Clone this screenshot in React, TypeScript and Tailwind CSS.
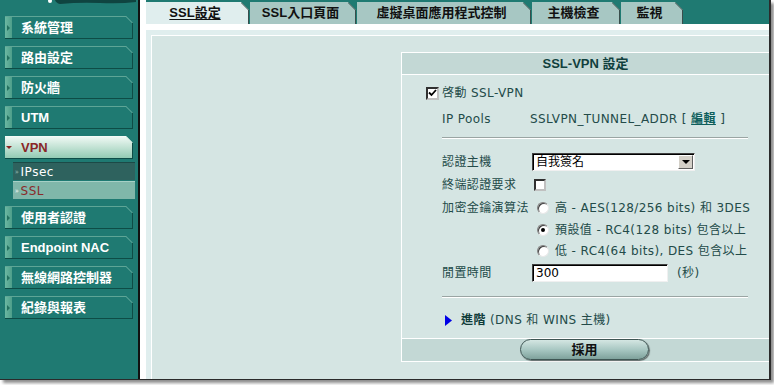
import React from "react";

const cjk = "font-['DejaVu_Sans','Noto_Sans_CJK_TC',sans-serif]";
const bold = "font-['Liberation_Sans','Noto_Sans_CJK_TC',sans-serif]";

const Notch = ({ line }: { line: string }) => (
  <svg className="absolute right-[-1px] top-[-1px]" width="7" height="7" viewBox="0 0 7 7">
    <polygon points="0,0 7,0 7,7" fill="#1f7a72" />
    <line x1="0" y1="0.5" x2="6.5" y2="7" stroke={line} strokeWidth="1" />
  </svg>
);

const MenuButton = ({ label }: { label: string }) => (
  <div className="relative ml-[5px] flex h-[23px] w-[128px] items-center border-t border-t-[#5ea596] border-r border-r-[#0e4c46] border-b border-b-[#0e4c46] bg-[#1f7a72]">
    <div className="flex h-full w-[7px] items-center justify-center bg-gradient-to-r from-[#6bb8a2] to-[#4e9e8a]">
      <span className="block h-0 w-0 border-y-[3px] border-l-[3px] border-y-transparent border-l-[#23705f]" />
    </div>
    <span className={`ml-[9px] text-[13px] font-bold text-white ${bold}`}>{label}</span>
    <Notch line="#6fb2a3" />
  </div>
);

const Sidebar = () => (
  <div className="flex h-full w-[138px] shrink-0 flex-col bg-[#1f7a72]">
    <div className="h-[16px]">
      <svg width="138" height="16" viewBox="0 0 138 16">
        <circle cx="50" cy="1" r="2" fill="#ffffff" />
        <path d="M55 0 H136 V2 Q120 4 100 3 Q80 2 60 4 Q56 3 55 0 Z" fill="#0f4440" />
      </svg>
    </div>
    <div className="flex flex-col gap-[7px]">
      {["系統管理", "路由設定", "防火牆", "UTM"].map((m) => (
        <MenuButton key={m} label={m} />
      ))}
      <div className="flex flex-col">
        <div className="relative ml-[5px] flex h-[23px] w-[128px] items-center border-t border-t-[#f4fbf7] border-r border-r-[#0e4c46] border-b border-b-[#0e4c46] bg-gradient-to-b from-[#eef8f3] to-[#93cbb4]">
          <div className="flex h-full w-[7px] items-center justify-center">
            <span className="block h-0 w-0 border-x-[3px] border-t-[3px] border-x-transparent border-t-[#8a2424]" />
          </div>
          <span className={`ml-[9px] text-[13px] font-bold text-[#8a2626] ${bold}`}>VPN</span>
          <Notch line="#d8ece2" />
        </div>
        <div className="ml-[13px] mt-[3px] flex h-[18px] w-[122px] items-center border-t border-t-[#1c4a47] bg-[#2e625e]">
          <span className="ml-[2px] text-[7px] leading-none text-[#8fb0aa]">»</span>
          <span className={`ml-[2px] text-[12px] tracking-[0.5px] text-white ${cjk}`}>IPsec</span>
        </div>
        <div className="ml-[13px] mt-[1px] flex h-[18px] w-[122px] items-center border-t border-t-[#a6d0c6] bg-[#80b7aa]">
          <span className="ml-[2px] text-[7px] leading-none text-[#e6f3ef]">»</span>
          <span className={`ml-[2px] text-[12px] tracking-[0.5px] text-[#8a2a2a] ${cjk}`}>SSL</span>
        </div>
      </div>
      {["使用者認證", "Endpoint NAC", "無線網路控制器", "紀錄與報表"].map((m) => (
        <MenuButton key={m} label={m} />
      ))}
    </div>
  </div>
);

const Tab = ({ label, width, active }: { label: string; width: string; active?: boolean }) => (
  <div
    className={`relative flex h-[22px] items-center justify-center pr-[6px] ${width} ${
      active ? "bg-[#e0eeee]" : "bg-[#a7c7c3]"
    }`}
  >
    <span className={`text-[13px] font-bold text-[#111] ${active ? "underline underline-offset-2" : ""} ${bold}`}>
      {label}
    </span>
    <svg className="absolute right-0 top-0" width="9" height="22" viewBox="0 0 9 22">
      <polygon points="0,0 9,0 9,22 8,22 8,8" fill="#1f7a72" />
      <polyline points="0,0.5 7.5,8 7.5,22" fill="none" stroke="#3a4e4c" strokeWidth="1" />
    </svg>
  </div>
);

const Radio = ({ checked }: { checked?: boolean }) => (
  <span className="flex h-[12px] w-[12px] items-center justify-center rounded-full border border-[#808080] border-b-[#e8e8e8] border-r-[#e8e8e8] bg-white shadow-[inset_1px_1px_0_#404040]">
    {checked && <span className="block h-[4px] w-[4px] rounded-full bg-black" />}
  </span>
);

const Hr = () => <div className="ml-[40px] mr-[21px] h-[2px] border-t border-t-[#9aa5a3] border-b border-b-white" />;

export default function App() {
  const label = `text-[12px] tracking-[0.4px] text-[#234b49] ${cjk}`;
  return (
    <div className="h-[385px] w-[774px] bg-white">
      <div className="flex h-[380px] w-[771px] overflow-hidden border-b border-r-2 border-[#2b2b2b] shadow-[3px_3px_3px_rgba(0,0,0,0.45)]">
        <Sidebar />
        <div className="w-[2px] bg-[#111]" />
        <div className="flex flex-1 flex-col bg-white pl-[6px]">
          <div className="flex h-[24px] items-end bg-[#1f7a72]">
            <Tab label="SSL設定" width="w-[104px]" active />
            <Tab label="SSL入口頁面" width="w-[107px]" />
            <Tab label="虛擬桌面應用程式控制" width="w-[175px]" />
            <Tab label="主機檢查" width="w-[89px]" />
            <Tab label="監視" width="w-[63px]" />
          </div>
          <div className="h-[6px]" />
          <div className="flex flex-1 flex-col bg-[#e0eeee] pl-[5px] pt-[5px]">
            <div className="flex flex-1 flex-col border-l border-t border-white bg-[#d5e5e3] pt-[16px]">
              <div className="ml-[249px] flex flex-col border-l border-t border-white">
                <div className="flex h-[22px] items-center justify-center border-b border-white bg-[#c3d8d5]">
                  <span className={`text-[13px] font-bold text-[#10403d] ${bold}`}>SSL-VPN 設定</span>
                </div>
                <div className="flex flex-col pt-[9px]">
                  <div className="ml-[24px] flex h-[18px] items-center gap-[3px]">
                    <span className="flex h-[13px] w-[13px] items-center justify-center border-2 border-[#303030] border-b-[#c0c0c0] border-r-[#c0c0c0] bg-white">
                      <svg width="9" height="8" viewBox="0 0 9 8">
                        <path d="M1 3.5 L3.5 6 L8 1" fill="none" stroke="#000" strokeWidth="1.8" />
                      </svg>
                    </span>
                    <span className={label}>啓動 SSL-VPN</span>
                  </div>
                  <div className="ml-[40px] mt-[7px] flex h-[20px] items-center">
                    <span className={`w-[88px] ${label}`}>IP Pools</span>
                    <span className={label}>
                      SSLVPN_TUNNEL_ADDR [ <span className="font-bold text-[#0e5f5c] underline">編輯</span> ]
                    </span>
                  </div>
                  <div className="mt-[8px]">
                    <Hr />
                  </div>
                  <div className="ml-[40px] mt-[13px] flex h-[19px] items-center">
                    <span className={`w-[90px] ${label}`}>認證主機</span>
                    <div className="flex h-[18px] w-[163px] items-center border border-[#404040] border-b-[#f0f0f0] border-r-[#f0f0f0] bg-white shadow-[inset_1px_1px_0_#000]">
                      <span className={`ml-[3px] flex-1 text-[12px] text-black ${cjk}`}>自我簽名</span>
                      <span className="mr-[1px] flex h-[14px] w-[15px] items-center justify-center border border-white border-b-[#606060] border-r-[#606060] bg-[#d4d0c8]">
                        <span className="block h-0 w-0 border-x-[4px] border-t-[4px] border-x-transparent border-t-black" />
                      </span>
                    </div>
                  </div>
                  <div className="ml-[40px] mt-[4px] flex h-[20px] items-center">
                    <span className={`w-[92px] ${label}`}>終端認證要求</span>
                    <span className="block h-[12px] w-[12px] border-2 border-[#303030] border-b-[#c0c0c0] border-r-[#c0c0c0] bg-white" />
                  </div>
                  <div className="ml-[40px] mt-[3px] flex h-[20px] items-center">
                    <span className={`w-[95px] ${label}`}>加密金鑰演算法</span>
                    <Radio />
                    <span className={`ml-[6px] ${label}`}>高 - AES(128/256 bits) 和 3DES</span>
                  </div>
                  <div className="ml-[135px] mt-[2px] flex h-[20px] items-center">
                    <Radio checked />
                    <span className={`ml-[6px] ${label}`}>預設值 - RC4(128 bits) 包含以上</span>
                  </div>
                  <div className="ml-[135px] mt-[1px] flex h-[20px] items-center">
                    <Radio />
                    <span className={`ml-[6px] ${label}`}>低 - RC4(64 bits), DES 包含以上</span>
                  </div>
                  <div className="ml-[40px] mt-[2px] flex h-[20px] items-center">
                    <span className={`w-[90px] ${label}`}>閒置時間</span>
                    <div className="flex h-[18px] w-[136px] items-center border border-[#404040] border-b-[#f0f0f0] border-r-[#f0f0f0] bg-white shadow-[inset_1px_1px_0_#000]">
                      <span className={`ml-[3px] text-[12px] text-black ${cjk}`}>300</span>
                    </div>
                    <span className={`ml-[9px] ${label}`}>(秒)</span>
                  </div>
                  <div className="mt-[13px]">
                    <Hr />
                  </div>
                  <div className="ml-[43px] mt-[12px] flex h-[20px] items-center">
                    <svg width="7" height="11" viewBox="0 0 7 11">
                      <polygon points="0,0 7,5.5 0,11" fill="#0000e6" />
                    </svg>
                    <span className={`ml-[9px] ${label}`}>
                      <span className={`font-bold text-[#0f3b39] ${bold}`}>進階</span> (DNS 和 WINS 主機)
                    </span>
                  </div>
                </div>
                <div className="mt-[8px] flex h-[24px] justify-center border-b border-t border-white bg-[#c3d8d5]">
                  <button className="ml-[-2px] flex h-[21px] w-[129px] items-center justify-center rounded-full border border-[#3f5654] bg-gradient-to-b from-[#d4e6e2] via-[#a9c8c3] to-[#7fa29c] shadow-[1px_1px_1px_rgba(0,0,0,0.5)]">
                    <span className={`text-[13px] font-bold text-[#111] ${bold}`}>採用</span>
                  </button>
                </div>
              </div>
            </div>
          </div>
        </div>
      </div>
    </div>
  );
}
